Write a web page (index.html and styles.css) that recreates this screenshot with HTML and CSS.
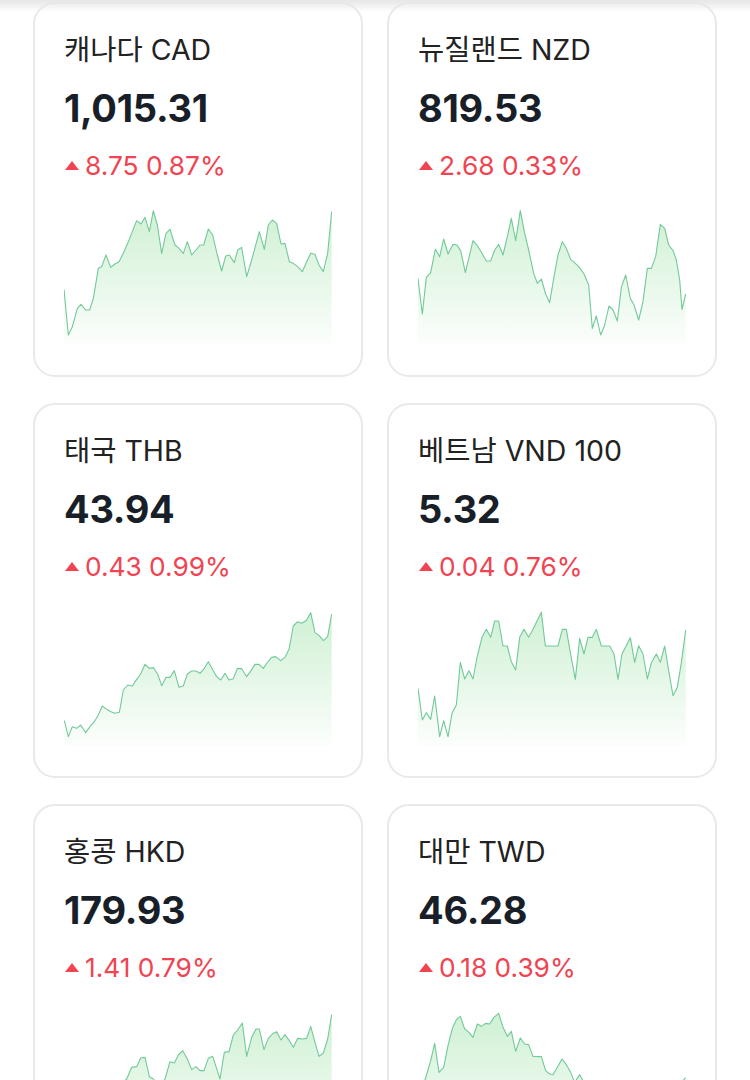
FILE: index.html
```html
<!DOCTYPE html>
<html lang="ko">
<head>
  <meta charset="UTF-8">
  <title>환율</title>
  <meta name="viewport" content="width=device-width,initial-scale=1">
  <link rel="stylesheet" href="styles.css">
</head>
<body>
  <div class="top-shade"></div>
  <div id="grid" class="grid"></div>

  <script>
  // points are sampled in a 804x405 box (x 27..831, y 30..435)
  const rates=[
    {name:'캐나다 CAD',price:'1,015.31',diff:'8.75',pct:'0.87%',dx:0,dy:0,pts:[27,268,40,405,52,380,67,325,78,313,92,330,104,330,115,295,130,205,140,200,153,165,167,202,180,192,192,185,205,160,220,125,245,62,258,72,270,52,283,95,295,32,307,75,320,160,333,100,345,88,360,135,372,145,385,160,397,125,410,165,423,150,435,135,446,135,460,87,473,105,487,165,500,213,512,168,523,165,538,188,548,150,560,142,575,230,590,180,613,95,628,148,640,75,652,60,665,70,678,132,690,130,703,185,715,190,728,200,742,215,755,185,767,160,780,163,792,195,805,215,818,160,830,35]},
    {name:'뉴질랜드 NZD',price:'819.53',diff:'2.68',pct:'0.33%',dx:-3,dy:0,pts:[30,235,43,342,55,232,68,218,82,147,95,170,107,117,120,162,135,133,147,135,158,152,172,218,195,122,210,140,222,160,235,183,248,183,260,150,272,133,285,165,298,110,310,55,323,122,337,32,350,100,362,150,377,220,388,250,400,237,413,282,425,308,438,230,450,165,463,125,475,145,488,178,502,190,515,203,528,222,542,255,553,385,565,348,578,405,590,375,603,318,615,330,628,363,640,262,653,225,667,295,678,315,692,360,705,305,718,205,730,205,743,170,757,73,770,85,782,135,795,152,805,180,815,240,822,328,833,282]},
    {name:'태국 THB',price:'43.94',diff:'0.43',pct:'0.99%',dx:0,dy:-3,pts:[28,362,40,410,52,380,65,385,77,375,92,398,105,380,118,365,130,345,142,318,155,328,168,335,180,340,193,337,205,270,218,255,232,258,245,238,257,222,270,193,283,205,295,203,308,222,320,257,333,232,345,232,358,212,372,262,385,258,397,222,410,213,423,213,435,220,448,205,460,185,472,207,485,230,497,240,510,220,522,240,535,236,547,205,560,206,575,230,588,212,600,193,612,193,625,205,638,186,650,172,662,170,677,182,690,172,702,148,715,78,728,65,740,70,753,62,767,38,780,98,793,107,805,122,818,110,830,42]},
    {name:'베트남 VND 100',price:'5.32',diff:'0.04',pct:'0.76%',dx:-3,dy:-3,pts:[30,265,43,360,55,338,68,358,80,288,95,410,107,362,120,410,132,340,145,315,157,187,170,237,183,212,195,237,208,168,222,112,235,88,248,112,260,63,272,63,285,138,298,138,310,185,323,210,335,112,348,88,362,112,375,88,400,37,412,138,425,138,450,138,463,88,475,88,488,163,502,238,515,115,528,162,540,112,553,112,565,88,580,138,605,138,618,162,630,238,642,162,667,113,680,187,692,137,705,162,718,237,730,188,745,162,757,187,770,138,782,212,795,287,808,262,820,188,833,90]},
    {name:'홍콩 HKD',price:'179.93',diff:'1.41',pct:'0.79%',dx:0,dy:-9,pts:[28,330,45,360,65,320,85,335,105,300,125,310,145,285,165,290,185,262,200,255,215,240,230,205,245,203,257,177,270,175,283,233,295,240,310,262,330,240,345,188,358,192,370,168,383,155,397,180,410,212,423,203,435,215,447,215,460,178,473,172,487,215,495,240,508,160,522,158,535,108,550,90,562,72,575,172,590,115,603,90,613,90,627,152,640,118,652,105,665,98,678,123,690,107,703,125,715,145,728,118,742,120,755,118,767,82,780,130,792,172,805,162,818,120,830,47]},
    {name:'대만 TWD',price:'46.28',diff:'0.18',pct:'0.39%',dx:-3,dy:-9,pts:[30,272,52,240,68,185,80,133,93,220,107,205,120,140,133,88,145,62,157,52,170,90,183,100,195,115,208,75,220,82,233,73,245,75,258,55,272,43,285,85,298,112,310,97,323,157,337,117,350,135,362,137,375,172,400,173,413,215,425,225,435,227,448,205,462,180,475,197,488,220,500,250,515,227,525,245,545,265,570,290,595,283,620,305,645,292,670,310,700,298,725,300,750,285,780,272,805,262,820,250,833,236]}
  ];

  const grid=document.getElementById('grid');

  function chart(r,i){
    const p=[];
    for(let k=0;k<r.pts.length;k+=2) p.push([r.pts[k]+r.dx,r.pts[k+1]+r.dy]);
    const line='M'+p.map(q=>q.join(' ')).join(' L');
    const area=line+` L${p[p.length-1][0]} 435 L${p[0][0]} 435 Z`;
    return `<svg class="chart" viewBox="27 30 804 405" preserveAspectRatio="none">
      <defs><linearGradient id="fill${i}" x1="0" y1="0" x2="0" y2="1">
        <stop offset="0" stop-color="#5fcf6e" stop-opacity=".3"/>
        <stop offset="1" stop-color="#5fcf6e" stop-opacity=".02"/>
      </linearGradient></defs>
      <path d="${area}" fill="url(#fill${i})"/>
      <path d="${line}" fill="none" stroke="#72c99a" stroke-width="1.1" stroke-linejoin="round" vector-effect="non-scaling-stroke"/>
    </svg>`;
  }

  rates.forEach((r,i)=>{
    const c=document.createElement('div'); c.className='card';
    c.innerHTML=`<div class="name">${r.name}</div>
      <div class="price">${r.price}</div>
      <div class="change"><span class="up"></span>${r.diff} ${r.pct}</div>
      ${chart(r,i)}`;
    grid.append(c);
  });
  </script>
</body>
</html>
```

FILE: styles.css
```css
body {
  margin:0; background:#fff;
  font-family:Inter,"Noto Sans CJK KR",sans-serif;
  color:#191f28;
}
.top-shade {
  position:fixed; top:0; left:0; right:0; height:12px;
  background:linear-gradient(#e6e6e8,rgba(255,255,255,0));
  z-index:2;
}
.grid {
  display:grid; grid-template-columns:330px 330px;
  column-gap:24px; row-gap:26px;
  padding:2px 33px 40px;
}
.card {
  border:2px solid #e9e9eb; border-radius:22px;
  padding:29px 29px 30px;
  display:flex; flex-direction:column;
}
.name {font-size:28.5px; line-height:34px; color:#222;}
.price {
  font-size:38px; line-height:40px; font-weight:700;
  margin-top:21px; letter-spacing:-0.3px;
}
.change {
  font-size:26.3px; line-height:30px; color:#f04452;
  margin-top:23px; display:flex; align-items:center;
}
.up {
  width:0; height:0; margin:0 6px 2px 1px;
  border-left:7px solid transparent; border-right:7px solid transparent;
  border-bottom:9px solid #f04452;
}
.chart {display:block; width:268px; height:135px; margin-top:29px;}
```
